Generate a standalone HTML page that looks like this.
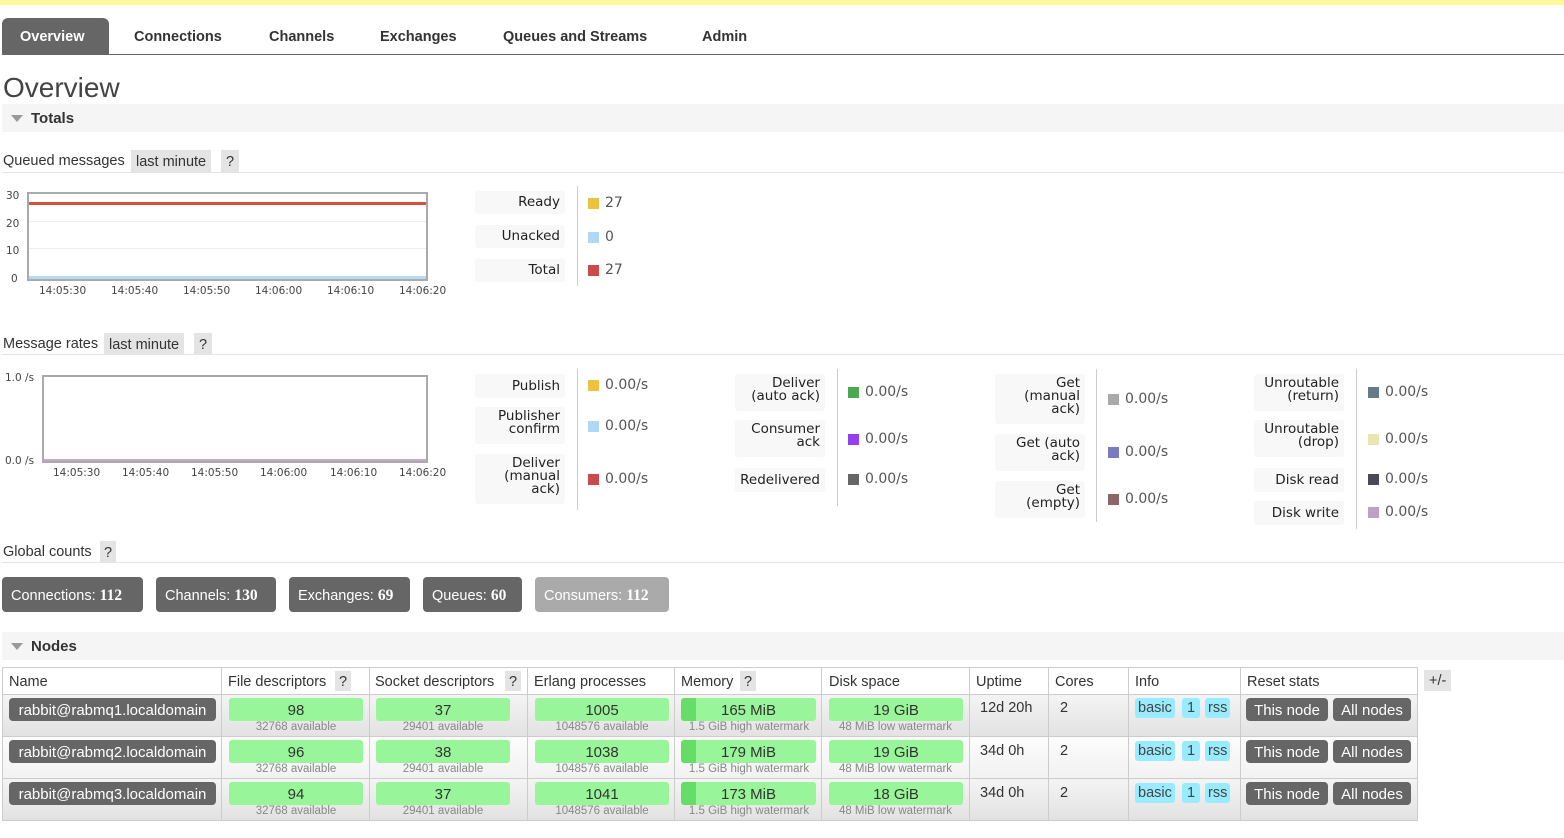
<!DOCTYPE html>
<html><head><meta charset="utf-8">
<style>
*{margin:0;padding:0;box-sizing:border-box}
body{width:1564px;height:838px;overflow:hidden;background:#fff;font-family:"Liberation Sans",sans-serif;color:#333;font-size:14px;position:relative}
.a{position:absolute;white-space:nowrap}
.tab{position:absolute;top:29px;font-weight:bold;font-size:14.5px;color:#333}
.bar{position:absolute;left:2px;right:0;height:28px;background:#f5f5f5}
.tri{position:absolute;left:9px;top:11px;width:0;height:0;border-left:6px solid transparent;border-right:6px solid transparent;border-top:7px solid #999}
.bart{position:absolute;left:29px;top:6px;font-weight:bold;font-size:15px;color:#333}
.hr{position:absolute;left:2px;right:0;height:1px;background:#e4e4e4}
.q{position:absolute;background:#e4e4e4;height:22px;line-height:24px;padding:0 5px;font-size:14.5px}
.lb{position:absolute;width:90px;background:#f8f8f8;border-radius:3px;text-align:right;padding:3px 5px;font-family:"DejaVu Sans",sans-serif;font-size:13.5px;line-height:13px;color:#222}
.sq{position:absolute;width:11px;height:11px}
.v{position:absolute;color:#555;font-family:"DejaVu Sans","Liberation Sans",sans-serif;font-size:14px}
.vl{position:absolute;width:1px;background:#ccc}
.btn{position:absolute;top:577px;height:35px;line-height:37px;background:#666;color:#fff;border-radius:4px;padding:0 9px;font-size:14.5px}
.btn b{font-family:"Liberation Serif",serif;font-size:15.5px}
.ax{position:absolute;font-family:"DejaVu Sans",sans-serif;font-size:10.5px;color:#444}
.g{position:absolute;height:23px;background:#99f599;border-radius:3px;text-align:center;line-height:25px;font-size:15px;color:#333}
.sub{position:absolute;text-align:center;font-size:11.5px;color:#888}
.nm{position:absolute;left:9px;width:207px;height:23px;background:#666;color:#fff;border-radius:4px;text-align:center;line-height:25px;font-size:15px}
.pill{position:absolute;height:20px;line-height:21px;background:#99ebff;border-radius:3px;padding:0 3px;font-size:14.5px;color:#444}
.rb{position:absolute;height:23px;line-height:25px;background:#666;color:#fff;border-radius:4px;padding:0 6px;font-size:15px;text-align:center}
</style></head><body>
<div class="a" style="left:0;top:0;width:1564px;height:5px;background:#fff99c"></div>
<div class="a" style="left:2px;top:18px;width:107px;height:37px;background:#666;border-radius:6px 6px 0 0"></div>
<div class="tab" style="left:20px;color:#fff">Overview</div>
<div class="tab" style="left:134px">Connections</div>
<div class="tab" style="left:269px">Channels</div>
<div class="tab" style="left:380px">Exchanges</div>
<div class="tab" style="left:503px">Queues and Streams</div>
<div class="tab" style="left:702px">Admin</div>
<div class="a" style="left:2px;top:54px;width:1562px;height:1px;background:#666"></div>
<div class="a" style="left:3px;top:72px;font-size:28px;color:#444">Overview</div>

<div class="bar" style="top:104px"><div class="tri"></div><div class="bart">Totals</div></div>

<div class="a" style="left:3px;top:153px;font-size:14.5px">Queued messages</div>
<div class="q" style="left:131px;top:150px">last minute</div>
<div class="q" style="left:221px;top:150px">?</div>
<div class="hr" style="top:172px"></div>

<div class="a" style="left:27px;top:192px;width:401px;height:89px;border:2px solid #aaa"></div>
<div class="a" style="left:29px;top:221px;width:397px;height:1px;background:#eee"></div>
<div class="a" style="left:29px;top:248px;width:397px;height:1px;background:#eee"></div>
<div class="a" style="left:29px;top:202px;width:397px;height:3px;background:#d5503f"></div>
<div class="a" style="left:29px;top:276px;width:397px;height:3px;background:#b4daf7"></div>
<div class="ax" style="left:6px;top:190px">30</div>
<div class="ax" style="left:6px;top:218px">20</div>
<div class="ax" style="left:6px;top:245px">10</div>
<div class="ax" style="left:11px;top:273px">0</div>
<div class="ax" style="left:39px;top:285px">14:05:30</div>
<div class="ax" style="left:111px;top:285px">14:05:40</div>
<div class="ax" style="left:183px;top:285px">14:05:50</div>
<div class="ax" style="left:255px;top:285px">14:06:00</div>
<div class="ax" style="left:327px;top:285px">14:06:10</div>
<div class="ax" style="left:399px;top:285px">14:06:20</div>

<div class="lb" style="left:475px;top:191px;height:23px;line-height:19px;padding-top:2px">Ready</div>
<div class="lb" style="left:475px;top:225px;height:23px;line-height:19px;padding-top:2px">Unacked</div>
<div class="lb" style="left:475px;top:259px;height:23px;line-height:19px;padding-top:2px">Total</div>
<div class="vl" style="left:577px;top:186px;height:100px"></div>
<div class="sq" style="left:588px;top:198px;background:#edc240"></div><div class="v" style="left:605px;top:195px">27</div>
<div class="sq" style="left:588px;top:232px;background:#afd8f8"></div><div class="v" style="left:605px;top:229px">0</div>
<div class="sq" style="left:588px;top:265px;background:#cb4b4b"></div><div class="v" style="left:605px;top:262px">27</div>

<div class="a" style="left:3px;top:336px;font-size:14.5px">Message rates</div>
<div class="q" style="left:104px;top:333px">last minute</div>
<div class="q" style="left:194px;top:333px">?</div>
<div class="hr" style="top:354px"></div>

<div class="a" style="left:42px;top:375px;width:386px;height:88px;border:2px solid #aaa"></div>
<div class="a" style="left:44px;top:459px;width:382px;height:2px;background:#c9a6cc"></div>
<div class="ax" style="left:5px;top:372px">1.0 /s</div>
<div class="ax" style="left:5px;top:455px">0.0 /s</div>
<div class="ax" style="left:53px;top:467px">14:05:30</div>
<div class="ax" style="left:122px;top:467px">14:05:40</div>
<div class="ax" style="left:191px;top:467px">14:05:50</div>
<div class="ax" style="left:260px;top:467px">14:06:00</div>
<div class="ax" style="left:330px;top:467px">14:06:10</div>
<div class="ax" style="left:399px;top:467px">14:06:20</div>

<div class="lb" style="left:475px;top:374px;height:24px;line-height:20px;padding-top:2px">Publish</div>
<div class="lb" style="left:475px;top:407px;height:37px">Publisher<br>confirm</div>
<div class="lb" style="left:475px;top:454px;height:50px">Deliver<br>(manual<br>ack)</div>
<div class="vl" style="left:577px;top:369px;height:141px"></div>
<div class="sq" style="left:588px;top:380px;background:#edc240"></div><div class="v" style="left:605px;top:377px">0.00/s</div>
<div class="sq" style="left:588px;top:421px;background:#afd8f8"></div><div class="v" style="left:605px;top:418px">0.00/s</div>
<div class="sq" style="left:588px;top:474px;background:#cb4b4b"></div><div class="v" style="left:605px;top:471px">0.00/s</div>
<div class="lb" style="left:735px;top:374px;height:37px">Deliver<br>(auto ack)</div>
<div class="lb" style="left:735px;top:420px;height:37px">Consumer<br>ack</div>
<div class="lb" style="left:735px;top:468px;height:24px;line-height:20px;padding-top:2px">Redelivered</div>
<div class="vl" style="left:837px;top:369px;height:137px"></div>
<div class="sq" style="left:848px;top:387px;background:#4da74d"></div><div class="v" style="left:865px;top:384px">0.00/s</div>
<div class="sq" style="left:848px;top:434px;background:#9440ed"></div><div class="v" style="left:865px;top:431px">0.00/s</div>
<div class="sq" style="left:848px;top:474px;background:#666"></div><div class="v" style="left:865px;top:471px">0.00/s</div>
<div class="lb" style="left:995px;top:374px;height:50px">Get<br>(manual<br>ack)</div>
<div class="lb" style="left:995px;top:434px;height:37px">Get (auto<br>ack)</div>
<div class="lb" style="left:995px;top:481px;height:37px">Get<br>(empty)</div>
<div class="vl" style="left:1096px;top:369px;height:153px"></div>
<div class="sq" style="left:1108px;top:394px;background:#aaa"></div><div class="v" style="left:1125px;top:391px">0.00/s</div>
<div class="sq" style="left:1108px;top:447px;background:#7c79c3"></div><div class="v" style="left:1125px;top:444px">0.00/s</div>
<div class="sq" style="left:1108px;top:494px;background:#8d6666"></div><div class="v" style="left:1125px;top:491px">0.00/s</div>
<div class="lb" style="left:1254px;top:374px;height:37px">Unroutable<br>(return)</div>
<div class="lb" style="left:1254px;top:420px;height:37px">Unroutable<br>(drop)</div>
<div class="lb" style="left:1254px;top:468px;height:24px;line-height:20px;padding-top:2px">Disk read</div>
<div class="lb" style="left:1254px;top:501px;height:24px;line-height:20px;padding-top:2px">Disk write</div>
<div class="vl" style="left:1356px;top:369px;height:160px"></div>
<div class="sq" style="left:1368px;top:387px;background:#647c8a"></div><div class="v" style="left:1385px;top:384px">0.00/s</div>
<div class="sq" style="left:1368px;top:434px;background:#e7e7b4"></div><div class="v" style="left:1385px;top:431px">0.00/s</div>
<div class="sq" style="left:1368px;top:474px;background:#4a4a55"></div><div class="v" style="left:1385px;top:471px">0.00/s</div>
<div class="sq" style="left:1368px;top:507px;background:#bca0c6"></div><div class="v" style="left:1385px;top:504px">0.00/s</div>

<div class="a" style="left:3px;top:544px;font-size:14.5px">Global counts</div>
<div class="q" style="left:100px;top:541px;padding:0 4px">?</div>
<div class="hr" style="top:562px"></div>

<div class="btn" style="left:2px;width:141px">Connections: <b>112</b></div>
<div class="btn" style="left:156px;width:120px">Channels: <b>130</b></div>
<div class="btn" style="left:289px;width:121px">Exchanges: <b>69</b></div>
<div class="btn" style="left:423px;width:99px">Queues: <b>60</b></div>
<div class="btn" style="left:535px;width:134px;background:#aaa">Consumers: <b>112</b></div>

<div class="bar" style="top:632px"><div class="tri"></div><div class="bart">Nodes</div></div>

<div class="a" style="left:2px;top:667px;width:1416px;height:154px;border:1px solid #ccc"></div>
<div class="a" style="left:3px;top:695px;width:1414px;height:42px;background:linear-gradient(#f4f4f4,#e2e2e2)"></div>
<div class="a" style="left:3px;top:737px;width:1414px;height:42px;background:linear-gradient(#fcfcfc,#f2f2f2)"></div>
<div class="a" style="left:3px;top:779px;width:1414px;height:41px;background:linear-gradient(#f4f4f4,#e2e2e2)"></div>
<div class="a" style="left:3px;top:694px;width:1414px;height:1px;background:#ccc"></div>
<div class="a" style="left:3px;top:736px;width:1414px;height:1px;background:#ccc"></div>
<div class="a" style="left:3px;top:778px;width:1414px;height:1px;background:#ccc"></div>
<div class="a" style="left:221px;top:668px;width:1px;height:152px;background:#ccc"></div>
<div class="a" style="left:369px;top:668px;width:1px;height:152px;background:#ccc"></div>
<div class="a" style="left:527px;top:668px;width:1px;height:152px;background:#ccc"></div>
<div class="a" style="left:674px;top:668px;width:1px;height:152px;background:#ccc"></div>
<div class="a" style="left:821px;top:668px;width:1px;height:152px;background:#ccc"></div>
<div class="a" style="left:969px;top:668px;width:1px;height:152px;background:#ccc"></div>
<div class="a" style="left:1048px;top:668px;width:1px;height:152px;background:#ccc"></div>
<div class="a" style="left:1128px;top:668px;width:1px;height:152px;background:#ccc"></div>
<div class="a" style="left:1240px;top:668px;width:1px;height:152px;background:#ccc"></div>

<div class="a" style="left:9px;top:674px;font-size:14.5px">Name</div>
<div class="a" style="left:228px;top:674px;font-size:14.5px">File descriptors</div><div class="q" style="left:335px;top:671px;height:20px;line-height:22px;padding:0 4px">?</div>
<div class="a" style="left:375px;top:674px;font-size:14.5px">Socket descriptors</div><div class="q" style="left:505px;top:671px;height:20px;line-height:22px;padding:0 4px">?</div>
<div class="a" style="left:534px;top:674px;font-size:14.5px">Erlang processes</div>
<div class="a" style="left:681px;top:674px;font-size:14.5px">Memory</div><div class="q" style="left:740px;top:671px;height:20px;line-height:22px;padding:0 4px">?</div>
<div class="a" style="left:829px;top:674px;font-size:14.5px">Disk space</div>
<div class="a" style="left:976px;top:674px;font-size:14.5px">Uptime</div>
<div class="a" style="left:1055px;top:674px;font-size:14.5px">Cores</div>
<div class="a" style="left:1135px;top:674px;font-size:14.5px">Info</div>
<div class="a" style="left:1247px;top:674px;font-size:14.5px">Reset stats</div>
<div class="q" style="left:1424px;top:670px;height:21px;line-height:22px">+/-</div>

<div class="nm" style="top:698px">rabbit@rabmq1.localdomain</div>
<div class="nm" style="top:740px">rabbit@rabmq2.localdomain</div>
<div class="nm" style="top:782px">rabbit@rabmq3.localdomain</div>

<div class="g" style="left:229px;top:698px;width:134px">98</div><div class="sub" style="left:229px;top:721px;width:134px">32768 available</div>
<div class="g" style="left:229px;top:740px;width:134px">96</div><div class="sub" style="left:229px;top:763px;width:134px">32768 available</div>
<div class="g" style="left:229px;top:782px;width:134px">94</div><div class="sub" style="left:229px;top:805px;width:134px">32768 available</div>

<div class="g" style="left:376px;top:698px;width:134px">37</div><div class="sub" style="left:376px;top:721px;width:134px">29401 available</div>
<div class="g" style="left:376px;top:740px;width:134px">38</div><div class="sub" style="left:376px;top:763px;width:134px">29401 available</div>
<div class="g" style="left:376px;top:782px;width:134px">37</div><div class="sub" style="left:376px;top:805px;width:134px">29401 available</div>

<div class="g" style="left:535px;top:698px;width:134px">1005</div><div class="sub" style="left:535px;top:721px;width:134px">1048576 available</div>
<div class="g" style="left:535px;top:740px;width:134px">1038</div><div class="sub" style="left:535px;top:763px;width:134px">1048576 available</div>
<div class="g" style="left:535px;top:782px;width:134px">1041</div><div class="sub" style="left:535px;top:805px;width:134px">1048576 available</div>

<div class="g" style="left:681px;top:698px;width:135px;background:linear-gradient(90deg,#66dd66 15px,#99f599 15px)">165 MiB</div><div class="sub" style="left:676px;top:721px;width:146px">1.5 GiB high watermark</div>
<div class="g" style="left:681px;top:740px;width:135px;background:linear-gradient(90deg,#66dd66 15px,#99f599 15px)">179 MiB</div><div class="sub" style="left:676px;top:763px;width:146px">1.5 GiB high watermark</div>
<div class="g" style="left:681px;top:782px;width:135px;background:linear-gradient(90deg,#66dd66 15px,#99f599 15px)">173 MiB</div><div class="sub" style="left:676px;top:805px;width:146px">1.5 GiB high watermark</div>

<div class="g" style="left:829px;top:698px;width:134px">19 GiB</div><div class="sub" style="left:822px;top:721px;width:147px">48 MiB low watermark</div>
<div class="g" style="left:829px;top:740px;width:134px">19 GiB</div><div class="sub" style="left:822px;top:763px;width:147px">48 MiB low watermark</div>
<div class="g" style="left:829px;top:782px;width:134px">18 GiB</div><div class="sub" style="left:822px;top:805px;width:147px">48 MiB low watermark</div>

<div class="a" style="left:980px;top:700px;font-size:14.5px">12d 20h</div>
<div class="a" style="left:980px;top:743px;font-size:14.5px">34d 0h</div>
<div class="a" style="left:980px;top:785px;font-size:14.5px">34d 0h</div>
<div class="a" style="left:1060px;top:700px;font-size:14.5px">2</div>
<div class="a" style="left:1060px;top:743px;font-size:14.5px">2</div>
<div class="a" style="left:1060px;top:785px;font-size:14.5px">2</div>

<div class="pill" style="left:1135px;top:698px">basic</div><div class="pill" style="left:1182px;top:698px;padding:0 5px">1</div><div class="pill" style="left:1205px;top:698px">rss</div>
<div class="pill" style="left:1135px;top:741px">basic</div><div class="pill" style="left:1182px;top:741px;padding:0 5px">1</div><div class="pill" style="left:1205px;top:741px">rss</div>
<div class="pill" style="left:1135px;top:783px">basic</div><div class="pill" style="left:1182px;top:783px;padding:0 5px">1</div><div class="pill" style="left:1205px;top:783px">rss</div>

<div class="rb" style="left:1246px;top:698px;width:82px">This node</div><div class="rb" style="left:1333px;top:698px;width:78px">All nodes</div>
<div class="rb" style="left:1246px;top:740px;width:82px">This node</div><div class="rb" style="left:1333px;top:740px;width:78px">All nodes</div>
<div class="rb" style="left:1246px;top:782px;width:82px">This node</div><div class="rb" style="left:1333px;top:782px;width:78px">All nodes</div>
</body></html>
